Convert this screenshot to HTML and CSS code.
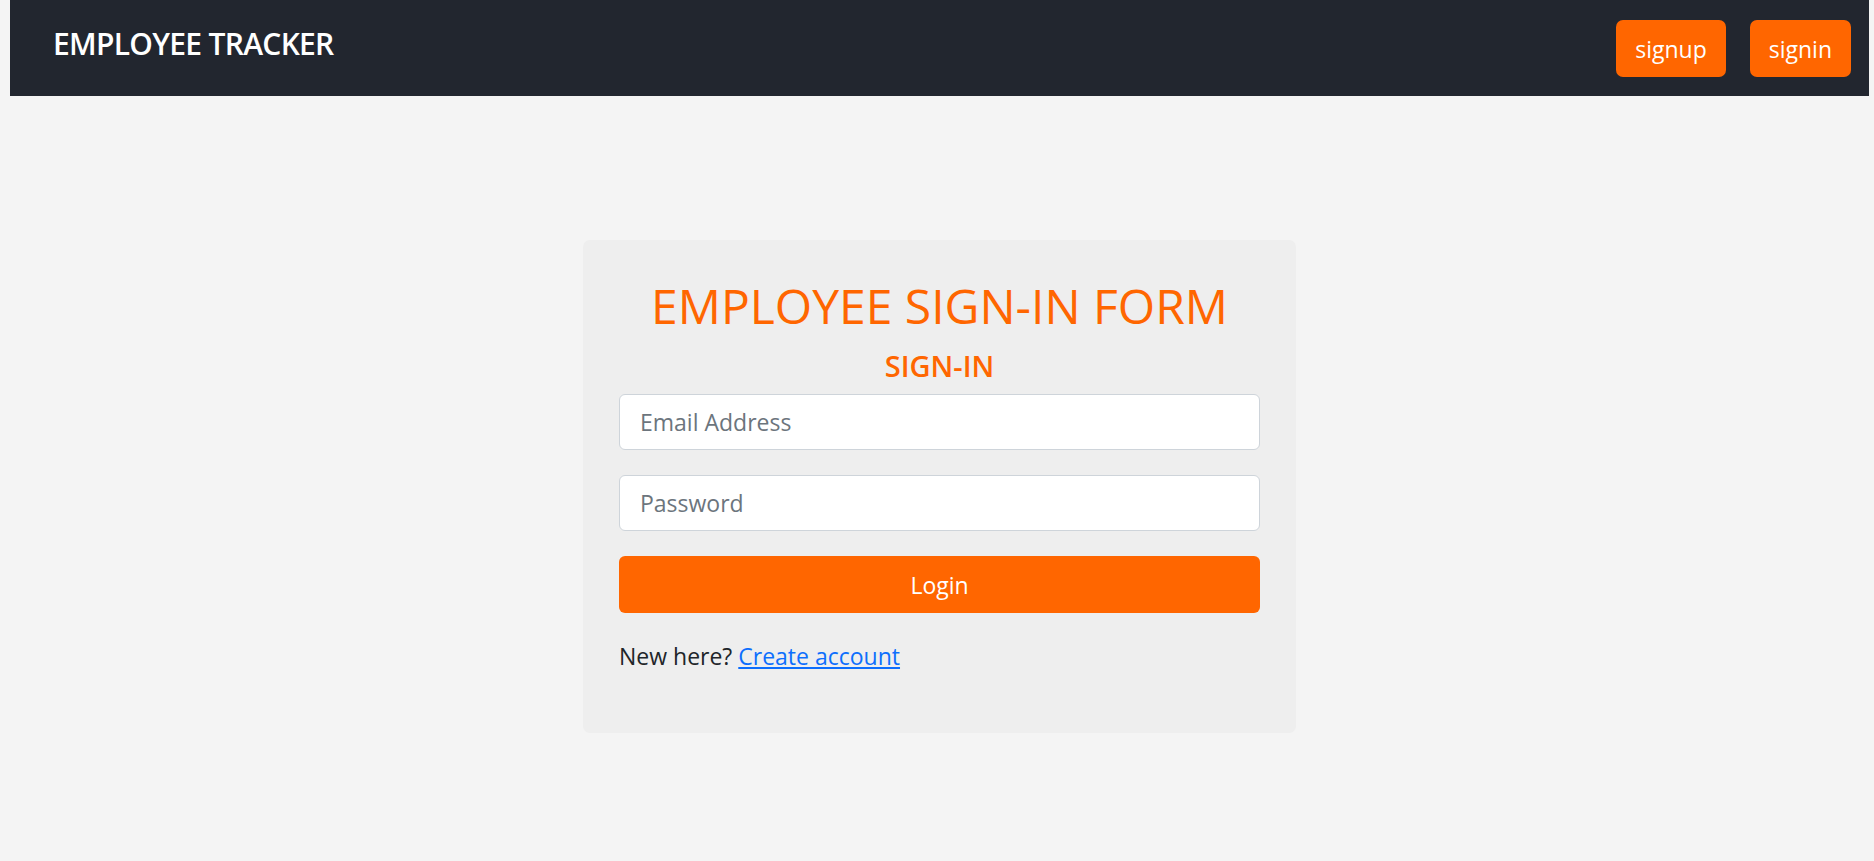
FILE: index.html
```html
<!DOCTYPE html>
<html lang="en">
<head>
<meta charset="utf-8">
<title>Employee Tracker</title>
<link rel="stylesheet" href="styles.css">
</head>
<body>
<nav class="navbar">
  <a class="brand" href="#">EMPLOYEE TRACKER</a>
  <div class="nav-actions">
    <button class="nav-btn">signup</button>
    <button class="nav-btn">signin</button>
  </div>
</nav>
<main class="main">
  <section class="card">
    <h1 class="title">EMPLOYEE SIGN-IN FORM</h1>
    <h2 class="subtitle">SIGN-IN</h2>
    <form class="form">
      <input class="field" type="email" placeholder="Email Address">
      <input class="field" type="password" placeholder="Password">
      <button class="login" type="button">Login</button>
    </form>
    <p class="note">New here? <a href="#" class="link">Create account</a></p>
  </section>
</main>
</body>
</html>
```

FILE: styles.css
```css
* { box-sizing: border-box; }

html, body {
  margin: 0;
  padding: 0;
  background: #f4f4f4;
  font-family: "Open Sans", "Noto Sans", sans-serif;
  color: #212529;
}

.navbar {
  margin: 0 5px 0 10px;
  height: 96px;
  background: #22262f;
  display: flex;
  align-items: center;
  justify-content: space-between;
  padding: 0 18px 0 43px;
}

.brand {
  color: #fff;
  text-decoration: none;
  font-size: 30px;
  font-weight: 600;
  letter-spacing: -0.7px;
  margin-top: -10px;
}

.nav-actions {
  display: flex;
  gap: 24px;
  margin-top: 1px;
}

.nav-btn {
  height: 57px;
  border: none;
  border-radius: 7px;
  background: #ff6600;
  color: #fff;
  font-family: inherit;
  font-size: 23px;
  padding: 0 19px;
}

.main {
  margin: 0 5px 0 10px;
  padding-top: 144px;
  display: flex;
  justify-content: center;
}

.card {
  width: 713px;
  background: #eeeeee;
  border-radius: 7px;
  padding: 37px 36px 39px;
}

.title {
  margin: 0;
  text-align: center;
  color: #ff6600;
  font-size: 48px;
  font-weight: 400;
  line-height: 1.2;
}

.subtitle {
  margin: 14px 0 0;
  text-align: center;
  color: #ff6600;
  font-size: 29px;
  font-weight: 600;
  line-height: 1.2;
}

.form {
  margin-top: 11px;
  display: flex;
  flex-direction: column;
  gap: 25px;
}

.field {
  height: 56px;
  width: 100%;
  border: 1px solid #ced4da;
  border-radius: 6px;
  background: #fff;
  padding: 0 20px;
  font-family: inherit;
  font-size: 23px;
  color: #212529;
}

.field::placeholder { color: #6c757d; }

.login {
  height: 57px;
  border: none;
  border-radius: 6px;
  background: #ff6600;
  color: #fff;
  font-family: inherit;
  font-size: 23px;
}

.note {
  margin: 26px 0 20px;
  font-size: 23px;
  line-height: 1.5;
}

.link { color: #0d6efd; }
```
